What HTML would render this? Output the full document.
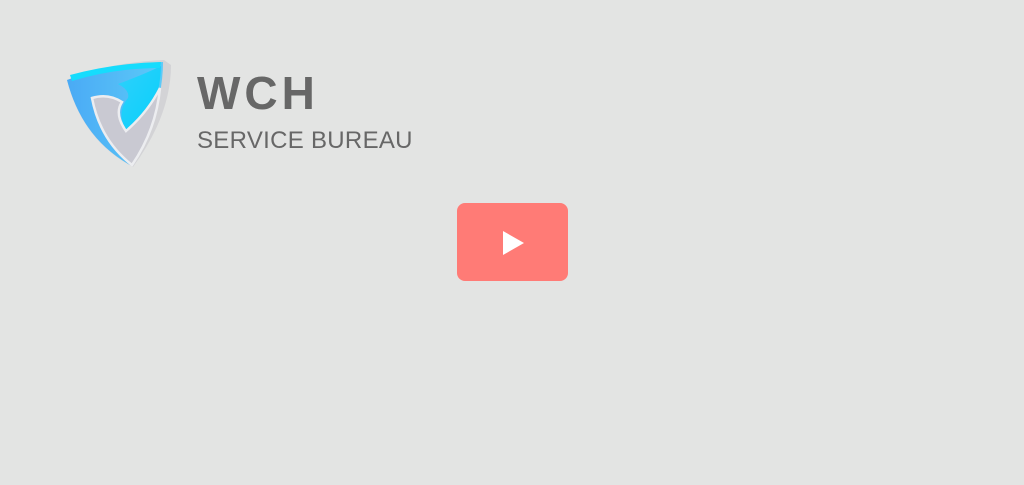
<!DOCTYPE html>
<html><head><style>
html,body{margin:0;padding:0;}
body{width:1024px;height:485px;background:#e3e4e3;position:relative;overflow:hidden;font-family:"Liberation Sans",sans-serif;}
.t1{position:absolute;left:197px;top:66px;font-size:46px;font-weight:bold;color:#676767;letter-spacing:4px;line-height:54px;}
.t2{position:absolute;left:197px;top:127px;font-size:24px;color:#676767;letter-spacing:0.3px;line-height:28px;}
.btn{position:absolute;left:457px;top:203px;width:111px;height:78px;background:#ff7b76;border-radius:8px;}
</style></head><body>
<svg style="position:absolute;left:0;top:0" width="200" height="200">
<defs>
<linearGradient id="g1" x1="0" y1="0" x2="1" y2="0"><stop offset="0" stop-color="#4aaaf5"/><stop offset="1" stop-color="#5ccaf8"/></linearGradient>
<linearGradient id="g3" x1="0" y1="0" x2="1" y2="1"><stop offset="0" stop-color="#2fd0fb"/><stop offset="1" stop-color="#07d0fb"/></linearGradient>
</defs>
<path d="M67 80 Q110 62 164 60 L171 65 Q171 115 133 167 Q82 140 67 80 Z" fill="#d3d3d6"/>
<path d="M67 80 Q110 64 163 62 Q163 112 130 165 Q82 138 67 80 Z" fill="url(#g1)"/>
<path d="M118 84 Q145 74 161 66 Q160 105 140 125 Q132 132 126 130 Q116 112 128 98 Q130 90 118 84 Z" fill="url(#g3)"/>
<path d="M92 98 Q108 93 122 102 Q114 114 126 131 Q148 112 160 88 Q156 130 132 165 Q100 140 92 98 Z" fill="#c9c9d2" stroke="#ecedf0" stroke-width="2.5"/>
<path d="M70 75 Q115 63 161 62 L160 68 Q115 68 72 81 Z" fill="#16dcfd"/>
</svg>
<div class="t1">WCH</div>
<div class="t2">SERVICE BUREAU</div>
<div class="btn"><svg width="111" height="78"><path d="M46 28 L46 52 L67 40 Z" fill="#fff"/></svg></div>
</body></html>
